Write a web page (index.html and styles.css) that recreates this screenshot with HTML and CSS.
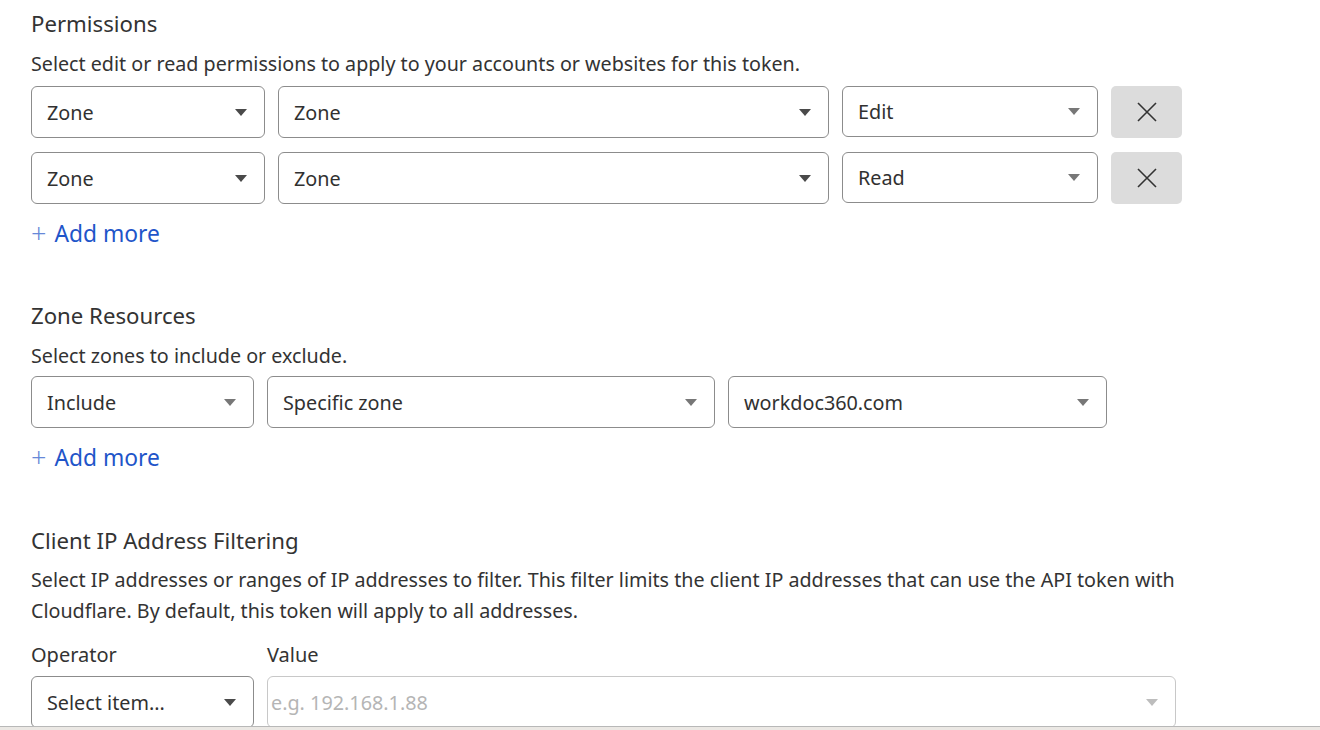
FILE: index.html
```html
<!DOCTYPE html>
<html lang="en">
<head>
<meta charset="utf-8">
<title>API Token</title>
<link rel="stylesheet" href="styles.css">
</head>
<body>
<main class="page">
  <section class="section">
    <h2 class="title">Permissions</h2>
    <p class="desc">Select edit or read permissions to apply to your accounts or websites for this token.</p>
    <div class="rows">
      <div class="row">
        <div class="select w-234"><span>Zone</span><i class="arrow"></i></div>
        <div class="select w-551"><span>Zone</span><i class="arrow"></i></div>
        <div class="select w-256 short"><span>Edit</span><i class="arrow light"></i></div>
        <button class="remove" aria-label="Remove"><svg viewBox="0 0 24 24" width="24" height="24"><path d="M3 3 L21 21 M21 3 L3 21" stroke="#333" stroke-width="1.6" fill="none"/></svg></button>
      </div>
      <div class="row">
        <div class="select w-234"><span>Zone</span><i class="arrow"></i></div>
        <div class="select w-551"><span>Zone</span><i class="arrow"></i></div>
        <div class="select w-256 short"><span>Read</span><i class="arrow light"></i></div>
        <button class="remove" aria-label="Remove"><svg viewBox="0 0 24 24" width="24" height="24"><path d="M3 3 L21 21 M21 3 L3 21" stroke="#333" stroke-width="1.6" fill="none"/></svg></button>
      </div>
    </div>
    <a class="add" href="#"><span class="plus">+</span>Add more</a>
  </section>

  <section class="section s2">
    <h2 class="title">Zone Resources</h2>
    <p class="desc">Select zones to include or exclude.</p>
    <div class="rows rows-tight">
      <div class="row">
        <div class="select w-223"><span>Include</span><i class="arrow light"></i></div>
        <div class="select w-448"><span>Specific zone</span><i class="arrow light"></i></div>
        <div class="select w-379"><span>workdoc360.com</span><i class="arrow light"></i></div>
      </div>
    </div>
    <a class="add" href="#"><span class="plus">+</span>Add more</a>
  </section>

  <section class="section s3">
    <h2 class="title">Client IP Address Filtering</h2>
    <p class="desc para">Select IP addresses or ranges of IP addresses to filter. This filter limits the client IP addresses that can use the API token with Cloudflare. By default, this token will apply to all addresses.</p>
    <div class="row labeled">
      <div class="field w-223">
        <label class="label">Operator</label>
        <div class="select"><span>Select item...</span><i class="arrow"></i></div>
      </div>
      <div class="field w-909">
        <label class="label">Value</label>
        <div class="select disabled"><span class="ph">e.g. 192.168.1.88</span><i class="arrow faint"></i></div>
      </div>
    </div>
  </section>
</main>
<div class="bottom-bar"></div>
</body>
</html>
```
FILE: styles.css
```css
* { box-sizing: border-box; }
html, body { margin: 0; padding: 0; background: #fff; }
body {
  font-family: "Noto Sans", "Open Sans", "DejaVu Sans", sans-serif;
  color: #313131;
  overflow: hidden;
  height: 730px;
}
.page { padding: 8px 0 0 31px; }
.title {
  margin: 0;
  font-size: 22.2px;
  font-weight: 400;
  line-height: 32px;
  color: #333;
}
.desc {
  margin: 9px 0 0;
  font-size: 19.7px;
  line-height: 30px;
  color: #333;
}
.para { width: 1160px; margin-top: 7px; line-height: 31px; }
.rows { display: flex; flex-direction: column; gap: 14px; margin-top: 7px; }
.rows-tight { margin-top: 5px; }
.row { display: flex; gap: 13px; }
.select {
  height: 52px;
  border: 1px solid #8c8c8c;
  border-radius: 6px;
  display: flex;
  align-items: center;
  justify-content: space-between;
  padding: 0 17px 0 15px;
  font-size: 19.8px;
  color: #313131;
  background: #fff;
}
.select.short { height: 51px; }
.arrow {
  width: 0; height: 0;
  border-left: 6.5px solid transparent;
  border-right: 6.5px solid transparent;
  border-top: 7px solid #4a4a4a;
}
.arrow.light { border-top-color: #777; }
.arrow.faint { border-top-color: #bdbdbd; }
.w-234 { width: 234px; }
.w-551 { width: 551px; }
.w-256 { width: 256px; }
.w-223 { width: 223px; }
.w-448 { width: 448px; }
.w-379 { width: 379px; }
.w-909 { width: 909px; }
.remove {
  width: 71px;
  height: 52px;
  border: 0;
  border-radius: 5px;
  background: #dcdcdc;
  display: flex;
  align-items: center;
  justify-content: center;
  padding: 0;
}
.add {
  display: inline-flex;
  align-items: center;
  margin-top: 14px;
  font-size: 22.8px;
  line-height: 32px;
  color: #1f55c9;
  text-decoration: none;
}
.plus {
  font-weight: 300;
  color: #6688d8;
  margin: -2px 8px 0 0;
  font-size: 27px;
  line-height: 32px;
}
.s2 { margin-top: 50px; }
.s3 { margin-top: 51px; }
.labeled { margin-top: 14px; }
.field { display: flex; flex-direction: column; }
.label { font-size: 20px; line-height: 30px; color: #333; margin-bottom: 6px; }
.select.disabled { border-color: #c8c8c8; padding-left: 3px; }
.ph { color: #b5b5b5; }
.bottom-bar {
  position: fixed;
  left: 0; right: 0; bottom: 0;
  height: 4px;
  background: #ebe8e4;
  border-top: 1px solid #b8b8b8;
}
```
